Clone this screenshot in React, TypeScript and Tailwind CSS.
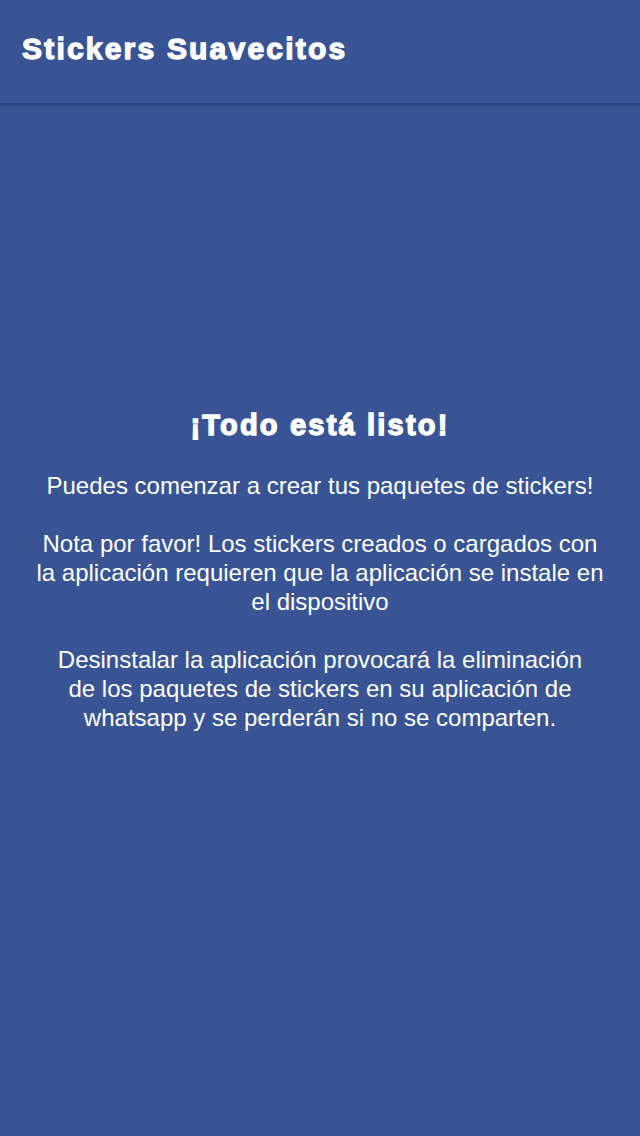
export default function App() {
  return (
    <div
      className="min-h-[1136px] w-full bg-[#385494] text-white flex flex-col"
      style={{ fontFamily: '"Liberation Sans", Arial, sans-serif' }}
    >
      <header className="h-[105px] flex items-center px-[22px] pb-[6px] border-b-2 border-[#2d4683] shadow-[0_1px_3px_rgba(0,0,0,0.12)]">
        <h1 className="text-[30px] font-bold tracking-[2.2px] [-webkit-text-stroke:1.3px_white]">
          Stickers Suavecitos
        </h1>
      </header>
      <main className="flex flex-col items-center text-center px-[32px] pt-[300px]">
        <h2 className="text-[29px] font-bold leading-[40px] tracking-[2.2px] [-webkit-text-stroke:1.4px_white]">
          ¡Todo está listo!
        </h2>
        <p className="mt-[26px] text-[24px] leading-[29px]">
          Puedes comenzar a crear tus paquetes de stickers!
        </p>
        <p className="mt-[29px] text-[24px] leading-[29px]">
          Nota por favor! Los stickers creados o cargados con la aplicación requieren que la
          aplicación se instale en el dispositivo
        </p>
        <p className="mt-[29px] text-[24px] leading-[29px] px-[20px]">
          Desinstalar la aplicación provocará la eliminación de los paquetes de stickers en su
          aplicación de whatsapp y se perderán si no se comparten.
        </p>
      </main>
    </div>
  );
}
